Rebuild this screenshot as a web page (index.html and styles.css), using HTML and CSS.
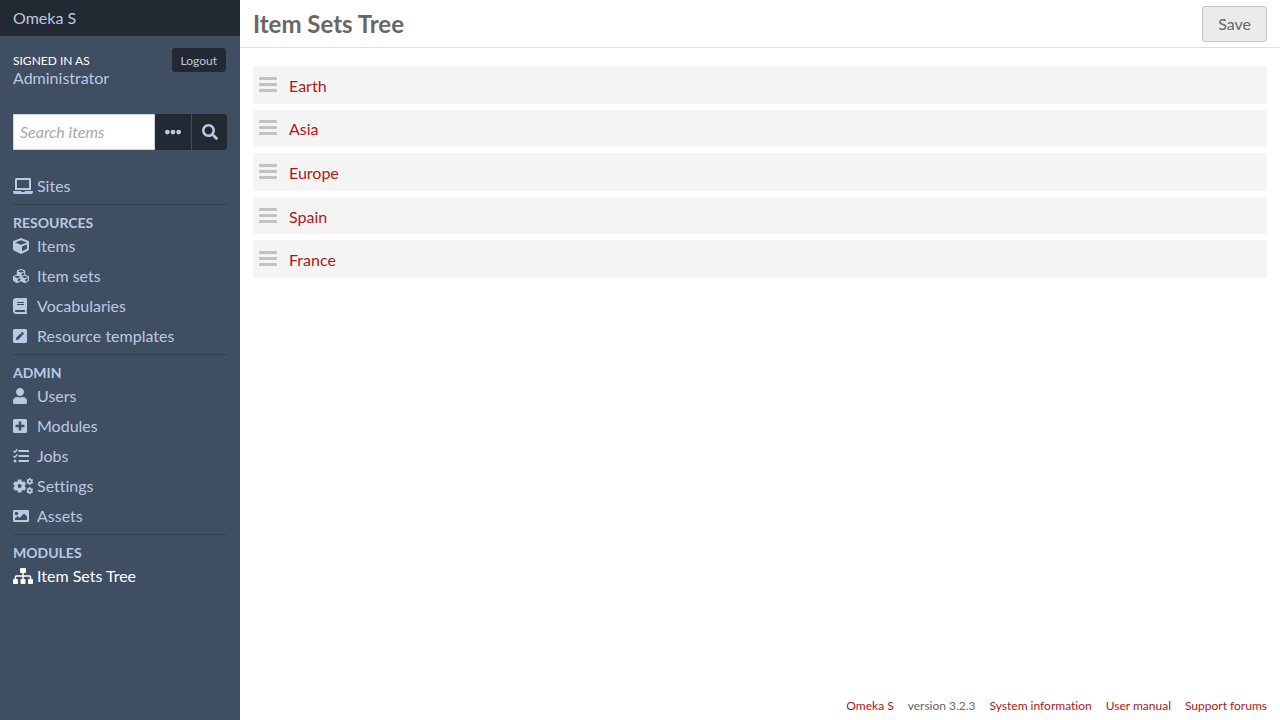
FILE: index.html
```html
<!DOCTYPE html>
<html lang="en">
<head>
<meta charset="utf-8">
<title>Item Sets Tree · Omeka S</title>
<link rel="stylesheet" href="styles.css">
</head>
<body>
<header class="sidebar">
  <div class="brand"><a href="#">Omeka S</a></div>
  <div class="user">
    <div class="user-id"><span class="signed">Signed in as</span><a href="#">Administrator</a></div>
    <a class="logout" href="#">Logout</a>
  </div>
  <form class="search">
    <input type="text" placeholder="Search items" aria-label="Search items">
    <button type="button" class="more" aria-label="Advanced search">
      <svg class="icon" viewBox="0 0 512 512"><circle cx="76" cy="256" r="76"/><circle cx="256" cy="256" r="76"/><circle cx="436" cy="256" r="76"/></svg>
    </button>
    <button type="submit" class="go" aria-label="Search">
      <svg class="icon" viewBox="0 0 512 512"><path d="M505 442.700L405.300 343c-4.500-4.500-10.600-7-17-7H372c27.600-35.300 44-79.700 44-128C416 93.100 322.900 0 208 0S0 93.100 0 208s93.100 208 208 208c48.300 0 92.700-16.400 128-44v16.300c0 6.400 2.500 12.500 7 17l99.700 99.700c9.400 9.400 24.600 9.400 33.900 0l28.300-28.300c9.400-9.400 9.400-24.600.1-34zM208 336c-70.700 0-128-57.200-128-128 0-70.700 57.200-128 128-128 70.700 0 128 57.200 128 128 0 70.700-57.200 128-128 128z"/></svg>
    </button>
  </form>
  <nav class="menu">
    <ul>
      <li><a href="#"><svg class="icon wide" viewBox="0 0 640 512"><path d="M624 416H381.540c-.74 19.810-14.710 32-32.740 32H288c-18.690 0-33.020-17.470-32.770-32H16c-8.800 0-16 7.200-16 16v16c0 35.200 28.800 64 64 64h512c35.200 0 64-28.800 64-64v-16c0-8.800-7.200-16-16-16zM576 48c0-26.400-21.600-48-48-48H112C85.600 0 64 21.600 64 48v336h512V48zm-64 272H128V64h384v256z"/></svg>Sites</a></li>
    </ul>
    <h4>Resources</h4>
    <ul>
      <li><a href="#"><svg class="icon" viewBox="0 0 512 512"><path d="M239.100 6.300l-208 78c-18.700 7-31.100 25-31.100 45v225.100c0 18.200 10.300 34.800 26.500 42.900l208 104c13.500 6.800 29.400 6.800 42.900 0l208-104c16.300-8.100 26.500-24.800 26.500-42.900V129.300c0-20-12.400-37.900-31.100-44.900l-208-78C262 2.200 250 2.200 239.100 6.300zM256 68.400l192 72v1.100l-192 78-192-78v-1.100l192-72zm32 356V275.500l160-65v133.900l-160 80z"/></svg>Items</a></li>
      <li><a href="#"><svg class="icon" viewBox="0 0 512 512"><path d="M488.600 250.200L392 214V105.500c0-15-9.300-28.400-23.400-33.700l-100-37.500c-8.100-3.100-17.100-3.100-25.300 0l-100 37.500c-14.100 5.300-23.400 18.700-23.400 33.700V214l-96.600 36.200C9.300 255.500 0 268.900 0 283.900V394c0 13.600 7.700 26.100 19.900 32.200l100 50c10.100 5.100 22.100 5.100 32.200 0l103.900-52 103.900 52c10.100 5.100 22.100 5.100 32.200 0l100-50c12.200-6.100 19.900-18.600 19.900-32.200V283.900c0-15-9.300-28.400-23.400-33.700zM358 214.800l-85 31.900v-68.200l85-37v73.300zM154 104.100l102-38.200 102 38.200v.6l-102 41.400-102-41.400v-.6zm84 291.100l-85 42.500v-79.100l85-38.800v75.400zm0-112l-102 41.400-102-41.400v-.6l102-38.200 102 38.200v.6zm240 112l-85 42.500v-79.100l85-38.800v75.400zm0-112l-102 41.400-102-41.400v-.6l102-38.200 102 38.200v.6z"/></svg>Item sets</a></li>
      <li><a href="#"><svg class="icon narrow" viewBox="0 0 448 512"><path d="M448 360V24c0-13.300-10.700-24-24-24H96C43 0 0 43 0 96v320c0 53 43 96 96 96h328c13.300 0 24-10.700 24-24v-16c0-7.500-3.500-14.300-8.900-18.700-4.200-15.400-4.200-59.300 0-74.700 5.400-4.300 8.900-11.100 8.900-18.600zM128 134c0-3.300 2.700-6 6-6h212c3.300 0 6 2.700 6 6v20c0 3.300-2.700 6-6 6H134c-3.300 0-6-2.700-6-6v-20zm0 64c0-3.300 2.700-6 6-6h212c3.300 0 6 2.700 6 6v20c0 3.300-2.700 6-6 6H134c-3.300 0-6-2.700-6-6v-20zm253.400 250H96c-17.700 0-32-14.300-32-32 0-17.600 14.400-32 32-32h285.400c-1.900 17.100-1.900 46.900 0 64z"/></svg>Vocabularies</a></li>
      <li><a href="#"><svg class="icon narrow" viewBox="0 0 448 512"><path d="M400 480H48c-26.500 0-48-21.500-48-48V80c0-26.500 21.500-48 48-48h352c26.500 0 48 21.500 48 48v352c0 26.500-21.500 48-48 48zM238.100 177.900L102.400 313.600l-6.300 57.100c-.8 7.600 5.600 14.100 13.300 13.300l57.100-6.300L302.200 242c2.300-2.300 2.300-6.100 0-8.500L246.700 178c-2.500-2.400-6.300-2.400-8.600-.1zM345 165.100L314.900 135c-9.400-9.400-24.600-9.400-33.900 0l-23.100 23.100c-2.300 2.300-2.300 6.100 0 8.500l55.500 55.500c2.300 2.300 6.100 2.300 8.500 0L345 199c9.300-9.300 9.300-24.500 0-33.900z"/></svg>Resource templates</a></li>
    </ul>
    <h4>Admin</h4>
    <ul>
      <li><a href="#"><svg class="icon narrow" viewBox="0 0 448 512"><path d="M224 256c70.700 0 128-57.300 128-128S294.700 0 224 0 96 57.300 96 128s57.300 128 128 128zm89.600 32h-16.700c-22.200 10.200-46.900 16-72.900 16s-50.600-5.800-72.900-16h-16.700C60.200 288 0 348.200 0 422.400V464c0 26.500 21.500 48 48 48h352c26.500 0 48-21.500 48-48v-41.600c0-74.200-60.200-134.400-134.400-134.400z"/></svg>Users</a></li>
      <li><a href="#"><svg class="icon narrow" viewBox="0 0 448 512"><path d="M400 32H48C21.500 32 0 53.500 0 80v352c0 26.500 21.500 48 48 48h352c26.500 0 48-21.500 48-48V80c0-26.500-21.500-48-48-48zm-32 252c0 6.600-5.400 12-12 12h-92v92c0 6.600-5.400 12-12 12h-56c-6.600 0-12-5.400-12-12v-92H92c-6.600 0-12-5.400-12-12v-56c0-6.600 5.400-12 12-12h92v-92c0-6.600 5.400-12 12-12h56c6.600 0 12 5.400 12 12v92h92c6.600 0 12 5.400 12 12v56z"/></svg>Modules</a></li>
      <li><a href="#"><svg class="icon" viewBox="0 0 512 512"><rect x="176" y="64" width="336" height="64" rx="16"/><rect x="176" y="224" width="336" height="64" rx="16"/><rect x="176" y="384" width="336" height="64" rx="16"/><circle cx="64" cy="416" r="48"/><path class="tick" d="M16 94l41 39 86-90M16 254l41 39 86-90"/></svg>Jobs</a></li>
      <li><a href="#"><svg class="icon wide" viewBox="0 0 640 512"><g class="gear"><circle cx="212" cy="256" r="116" stroke-width="104"/><path stroke-width="116" d="M212 48v70M212 394v70M32 152l60 35M332 325l60 35M32 360l60-35M332 187l60-35"/><circle cx="536" cy="108" r="60" stroke-width="52"/><path stroke-width="56" d="M536 0v40M536 176v40M443 54l35 20M594 142l35 20M443 162l35-20M594 74l35-20"/><circle cx="536" cy="404" r="60" stroke-width="52"/><path stroke-width="56" d="M536 296v40M536 472v40M443 350l35 20M594 438l35 20M443 458l35-20M594 370l35-20"/></g></svg>Settings</a></li>
      <li><a href="#"><svg class="icon" viewBox="0 0 512 512"><path d="M464 448H48c-26.510 0-48-21.490-48-48V112c0-26.510 21.490-48 48-48h416c26.510 0 48 21.490 48 48v288c0 26.510-21.490 48-48 48zM112 120c-30.928 0-56 25.072-56 56s25.072 56 56 56 56-25.072 56-56-25.072-56-56-56zM64 384h384V272l-87.515-87.515c-4.686-4.686-12.284-4.686-16.971 0L208 320l-55.515-55.515c-4.686-4.686-12.284-4.686-16.971 0L64 336v48z"/></svg>Assets</a></li>
    </ul>
    <h4>Modules</h4>
    <ul>
      <li><a class="active" href="#"><svg class="icon wide" viewBox="0 0 640 512"><rect x="224" width="192" height="160" rx="32"/><rect y="352" width="160" height="160" rx="32"/><rect x="240" y="352" width="160" height="160" rx="32"/><rect x="480" y="352" width="160" height="160" rx="32"/><path d="M296 128h48v104h192c24 0 48 24 48 48v72h-48v-72H344v72h-48v-72H104v72H56v-72c0-24 24-48 48-48h192z"/></svg>Item Sets Tree</a></li>
    </ul>
  </nav>
</header>
<div class="page">
  <div class="titlebar">
    <h1>Item Sets Tree</h1>
    <button type="button" class="save">Save</button>
  </div>
  <main>
    <ul class="tree">
      <li><svg class="handle" viewBox="0 0 18 16"><rect y="1" width="18" height="3" rx="1"/><rect y="7" width="18" height="3" rx="1"/><rect y="13" width="18" height="3" rx="1"/></svg><a href="#">Earth</a></li>
      <li><svg class="handle" viewBox="0 0 18 16"><rect y="1" width="18" height="3" rx="1"/><rect y="7" width="18" height="3" rx="1"/><rect y="13" width="18" height="3" rx="1"/></svg><a href="#">Asia</a></li>
      <li><svg class="handle" viewBox="0 0 18 16"><rect y="1" width="18" height="3" rx="1"/><rect y="7" width="18" height="3" rx="1"/><rect y="13" width="18" height="3" rx="1"/></svg><a href="#">Europe</a></li>
      <li><svg class="handle" viewBox="0 0 18 16"><rect y="1" width="18" height="3" rx="1"/><rect y="7" width="18" height="3" rx="1"/><rect y="13" width="18" height="3" rx="1"/></svg><a href="#">Spain</a></li>
      <li><svg class="handle" viewBox="0 0 18 16"><rect y="1" width="18" height="3" rx="1"/><rect y="7" width="18" height="3" rx="1"/><rect y="13" width="18" height="3" rx="1"/></svg><a href="#">France</a></li>
    </ul>
  </main>
  <footer>
    <a href="#">Omeka S</a>
    <span>version 3.2.3</span>
    <a href="#">System information</a>
    <a href="#">User manual</a>
    <a href="#">Support forums</a>
  </footer>
</div>
</body>
</html>
```
FILE: styles.css
```css
* { box-sizing: border-box; }

body {
  margin: 0;
  min-height: 100vh;
  display: flex;
  background: #fff;
  color: #676767;
  font: 16px/24px Lato, sans-serif;
  font-variant-ligatures: none;
}

a { color: #a91919; text-decoration: none; }
ul { list-style: none; margin: 0; padding: 0; }
button, input { font: inherit; margin: 0; }

/* Sidebar */
.sidebar {
  flex: 0 0 240px;
  min-width: 0;
  background: #404e61;
  color: #b9c9e3;
}
.sidebar a { color: #b9c9e3; }

.brand {
  padding: 6px 13px;
  background: #222932;
}

.user {
  display: flex;
  justify-content: space-between;
  align-items: flex-start;
  padding: 12px 14px 0 13px;
}
.user-id {
  display: flex;
  flex-direction: column;
  padding-top: 4px;
  line-height: 18px;
}
.signed {
  color: #fff;
  font-size: 12px;
  line-height: 17px;
  text-transform: uppercase;
}
.user .logout {
  padding: 1px 9px 0;
  border-radius: 3px;
  background: #222932;
  font-size: 12px;
  line-height: 23px;
}

.search {
  display: flex;
  height: 36px;
  margin: 27px 13px 0;
}
.search input {
  flex: 1;
  width: 100%;
  min-width: 0;
  padding: 0 6px;
  border: 1px solid #ced5e0;
  border-radius: 0;
  background: #fff;
}
.search input::placeholder { color: #a8a8a8; font-style: italic; }
.search button {
  flex: none;
  display: flex;
  align-items: center;
  justify-content: center;
  width: 36px;
  padding: 0;
  border: 0;
  background: #222932;
  color: #b9c9e3;
}
.search .go {
  border-left: 1px solid #404e61;
  border-radius: 0 3px 3px 0;
}

.icon {
  display: block;
  width: 16px;
  height: 16px;
  fill: currentColor;
}
.icon.wide { width: 20px; }
.icon.narrow { width: 14px; }
.tick { fill: none; stroke: currentColor; stroke-width: 44; }
.gear { fill: none; stroke: currentColor; }

.menu { padding: 21px 13px 0; }
.menu a {
  display: grid;
  grid-template-columns: 24px 1fr;
  align-items: center;
  line-height: 30px;
}
.menu .active { color: #fff; }
.menu h4 {
  margin: 3px 0 0;
  padding-top: 10px;
  border-top: 1px solid #344250;
  font-size: 14px;
  line-height: 16px;
  text-transform: uppercase;
}

/* Content */
.page {
  flex: 1;
  min-width: 0;
  display: flex;
  flex-direction: column;
}
.titlebar {
  display: flex;
  justify-content: space-between;
  align-items: center;
  padding: 6px 13px 5px;
  border-bottom: 1px solid #dfdfdf;
}
h1 { margin: 0; font-size: 24px; line-height: 36px; }
.save {
  padding: 5px 15px;
  border: 1px solid #c6c6c6;
  border-radius: 3px;
  background: #ebebeb;
  color: #676767;
}

main { flex: 1; padding: 18px 13px; }
.tree {
  display: grid;
  grid-auto-rows: 1fr;
  gap: 6px;
  min-height: 212px;
}
.tree li {
  display: flex;
  align-items: center;
  gap: 12px;
  padding: 2px 6px 0;
  border-radius: 2px;
  background: #f4f4f4;
}
.handle {
  width: 18px;
  height: 16px;
  margin-bottom: 4px;
  fill: #c2c2c2;
}

footer {
  display: flex;
  justify-content: flex-end;
  gap: 14px;
  padding: 0 13px 5px;
  font-size: 12px;
  line-height: 18px;
}
```
